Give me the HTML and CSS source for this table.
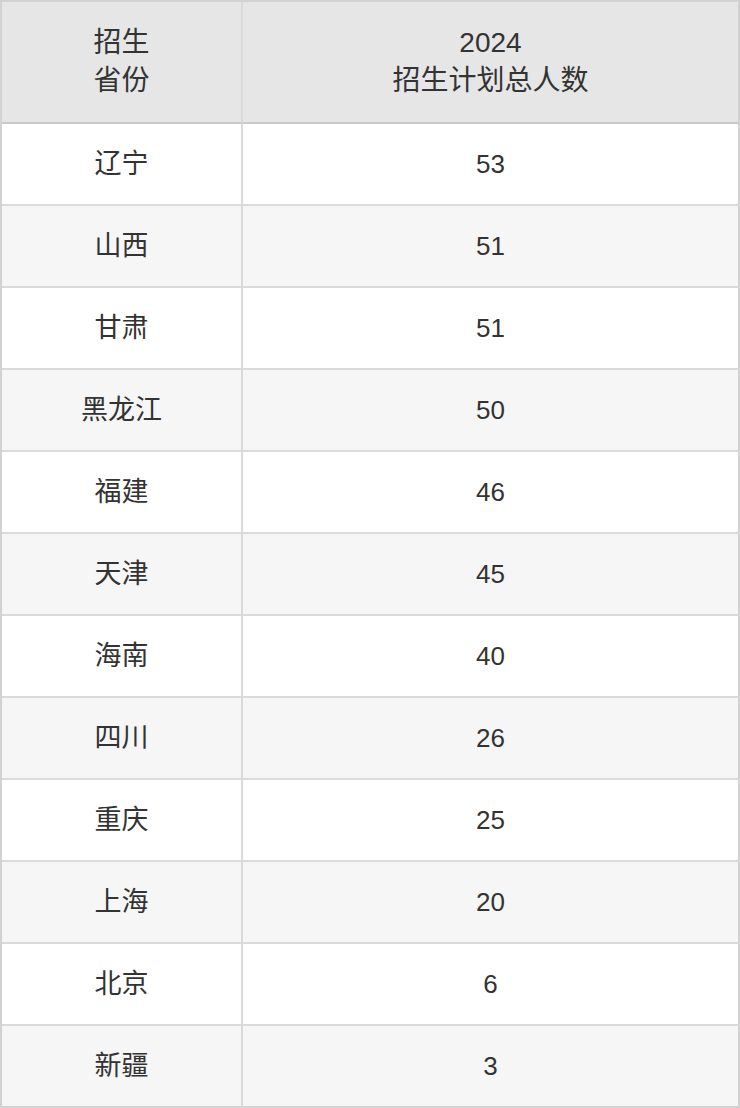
FILE: index.html
```html
<!DOCTYPE html>
<html lang="zh-CN">
<head>
<meta charset="utf-8">
<title>招生计划</title>
<link rel="stylesheet" href="styles.css">
</head>
<body>
<table class="plan">
  <thead>
    <tr>
      <th class="col-prov">招生<br>省份</th>
      <th class="col-num">2024<br>招生计划总人数</th>
    </tr>
  </thead>
  <tbody>
    <tr><td class="prov">辽宁</td><td>53</td></tr>
    <tr><td class="prov">山西</td><td>51</td></tr>
    <tr><td class="prov">甘肃</td><td>51</td></tr>
    <tr><td class="prov">黑龙江</td><td>50</td></tr>
    <tr><td class="prov">福建</td><td>46</td></tr>
    <tr><td class="prov">天津</td><td>45</td></tr>
    <tr><td class="prov">海南</td><td>40</td></tr>
    <tr><td class="prov">四川</td><td>26</td></tr>
    <tr><td class="prov">重庆</td><td>25</td></tr>
    <tr><td class="prov">上海</td><td>20</td></tr>
    <tr><td class="prov">北京</td><td>6</td></tr>
    <tr><td class="prov">新疆</td><td>3</td></tr>
  </tbody>
</table>
</body>
</html>
```
FILE: styles.css
```css
html, body {
  margin: 0;
  padding: 0;
  background: #ffffff;
}
.plan {
  width: 740px;
  border-collapse: separate;
  border-spacing: 0;
  border-top: 2px solid #d2d2d2;
  border-left: 2px solid #d2d2d2;
  table-layout: fixed;
  font-family: "Liberation Sans", "Noto Sans CJK SC", sans-serif;
  font-size: 26px;
  color: #333333;
}
.plan th,
.plan td {
  padding: 0;
  text-align: center;
  vertical-align: middle;
  border-right: 2px solid #dadada;
  border-bottom: 2px solid #dadada;
  font-weight: normal;
}
.plan .col-prov { width: 239px; }
.plan th {
  height: 120px;
  font-size: 28px;
  line-height: 38px;
  background: #e6e6e6;
  border-bottom-color: #c9c9c9;
}
.plan td {
  height: 80px;
  line-height: 36px;
}
.plan td.prov {
  font-size: 27px;
}
.plan tbody tr:nth-child(even) td {
  background: #f6f6f6;
}
.plan tr th:last-child,
.plan tr td:last-child {
  border-right-color: #d2d2d2;
}
.plan tbody tr:last-child td {
  border-bottom-color: #d2d2d2;
}
```
